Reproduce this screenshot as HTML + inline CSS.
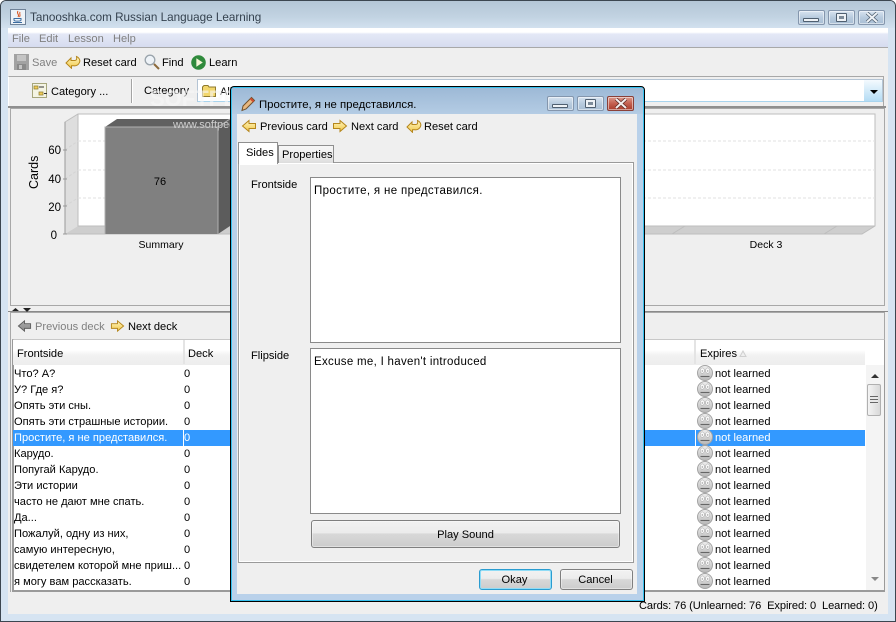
<!DOCTYPE html>
<html><head><meta charset="utf-8"><style>
html,body{margin:0;padding:0;width:896px;height:622px;overflow:hidden;background:#fff}
body{position:relative;font-family:"Liberation Sans","Noto Sans CJK SC",sans-serif;font-size:11.1px;color:#000}
div,span,svg{position:absolute;box-sizing:border-box}
.t{white-space:nowrap;line-height:14px;height:14px;margin-top:1px}
.g{color:#808080}
.wb{width:27px;height:15px;border:1px solid #8496ad;border-radius:2px;background:linear-gradient(#d8e4f0,#b8cbde 50%,#a8bed4);box-shadow:inset 0 0 0 1px rgba(255,255,255,.5)}
.btn{border:1px solid #7f7f7f;border-radius:3px;background:linear-gradient(#f2f2f2,#ececec 45%,#d8d8d8 50%,#cccccc);text-align:center;box-shadow:inset 0 0 0 1px rgba(255,255,255,.4)}
.ta{background:#fff;border:1px solid #8a8a8a}
.row{left:13px;width:852px;height:16px}
.fc{left:697px;width:16px;height:16px}
</style></head><body>
<svg width="0" height="0" style="left:0;top:0">
<defs>
<linearGradient id="y" x1="0" y1="0" x2="0" y2="1"><stop offset="0" stop-color="#fff6c0"/><stop offset="1" stop-color="#f2c848"/></linearGradient>
<linearGradient id="s" x1="0" y1="0" x2="0" y2="1"><stop offset="0" stop-color="#f0f0f0"/><stop offset=".5" stop-color="#d2d2d2"/><stop offset="1" stop-color="#b8b8b8"/></linearGradient>
<symbol id="r" viewBox="0 0 16 14"><path d="M1.500 4.500H8V1.500L14.500 7L8 12.500V9.500H1.500Z" fill="url(#y)" stroke="#b5861c"/></symbol>
<symbol id="l" viewBox="0 0 16 14"><path d="M14.500 4.500H8V1.500L1.500 7L8 12.500V9.500H14.500Z" fill="url(#y)" stroke="#b5861c"/></symbol>
<symbol id="u" viewBox="0 0 16 14"><path d="M1 8L6 3V5.500H10C11.500 5.500 12 4 11.500 1.500C14 2.500 15.500 5 14.500 7.500C13.500 10 11 11 9 10.800H6.500V13.300Z" fill="url(#y)" stroke="#b5861c"/></symbol>
<symbol id="f" viewBox="0 0 16 16"><circle cx="8" cy="8" r="7.500" fill="url(#s)" stroke="#a4a4a4"/><ellipse cx="5.300" cy="5.600" rx="2.100" ry="2.700" fill="#f8f8f8" stroke="#a0a0a0" stroke-width=".5"/><ellipse cx="10.700" cy="5.600" rx="2.100" ry="2.700" fill="#f8f8f8" stroke="#a0a0a0" stroke-width=".5"/><circle cx="5.300" cy="6" r=".7" fill="#999"/><circle cx="10.700" cy="6" r=".7" fill="#999"/><path d="M3.500 11.500H12.500" stroke="#666" stroke-width="1.100"/></symbol>
</defs></svg>

<!-- main window frame -->
<div style="left:0;top:0;width:896px;height:622px;background:#d6e4f2;border:1px solid #3c4650;border-radius:6px 6px 0 0"></div>
<div style="left:1px;top:1px;width:894px;height:27px;background:linear-gradient(#b4c6d6,#c2d3e2 60%,#d2e1ef);border-radius:5px 5px 0 0"></div>
<svg style="left:10px;top:9px" width="16" height="17" viewBox="0 0 16 17"><rect x=".5" y=".5" width="15" height="15" fill="#eef3f8" stroke="#6f8298"/><path d="M8 2C6 5 10 5 8 8M10 3C9 5 11 6 9.500 8" stroke="#d8541e" fill="none"/><path d="M4 9.500H11V11C11 12.500 4 12.500 4 11ZM3 13.500H12" stroke="#3b6ca0" fill="none"/></svg>
<div class="t" style="left:30px;top:10px;color:#35424f;font-size:11.700px">Tanooshka.com Russian Language Learning</div>
<div class="wb" style="left:798px;top:10px"><div style="left:4px;top:7px;width:16px;height:4px;background:#eef2f6;border:1px solid #4f5f70;border-radius:1px"></div></div>
<div class="wb" style="left:828px;top:10px"><div style="left:7px;top:2px;width:11px;height:9px;background:#eef2f6;border:1px solid #4f5f70;border-radius:1px"></div><div style="left:10px;top:5px;width:5px;height:3px;background:#7d8b99"></div></div>
<div class="wb" style="left:858px;top:10px"><svg style="left:5px;top:1px" width="16" height="11" viewBox="0 0 16 11"><path d="M3 1L13 10M13 1L3 10" stroke="#4f5f70" stroke-width="3.500"/><path d="M3 1L13 10M13 1L3 10" stroke="#eef2f6" stroke-width="2"/></svg></div>

<!-- client -->
<div style="left:8px;top:28px;width:880px;height:586px;background:#efefef"></div>
<div style="left:8px;top:28px;width:880px;height:20px;background:linear-gradient(#fff,#fff 22%,#e4e8f6 32%,#d6dcef);border-bottom:1px solid #a8a8a8"></div>
<div class="t g" style="left:12px;top:31px">File</div>
<div class="t g" style="left:39px;top:31px">Edit</div>
<div class="t g" style="left:68px;top:31px">Lesson</div>
<div class="t g" style="left:113px;top:31px">Help</div>

<!-- toolbar -->
<svg style="left:14px;top:54px" width="15" height="16" viewBox="0 0 15 16"><rect width="15" height="16" fill="#a2a2a2"/><rect x="3" y="1" width="9" height="6" fill="#c4c4c4"/><rect x="3" y="10" width="9" height="6" fill="#8a8a8a"/><rect x="5" y="11" width="3" height="4" fill="#c4c4c4"/></svg>
<div class="t g" style="left:32px;top:55px">Save</div>
<svg style="left:65px;top:55px" width="16" height="14"><use href="#u" width="16" height="14"/></svg>
<div class="t" style="left:83px;top:55px">Reset card</div>
<svg style="left:144px;top:54px" width="16" height="16" viewBox="0 0 16 16"><circle cx="6" cy="6" r="4.800" fill="#eef3f8" stroke="#9aa4ac" stroke-width="1.300"/><path d="M10 10L15 15" stroke="#8c6a3c" stroke-width="2"/></svg>
<div class="t" style="left:162px;top:55px">Find</div>
<svg style="left:191px;top:55px" width="15" height="15" viewBox="0 0 14 14"><circle cx="7" cy="7" r="6.800" fill="#2f8a3c"/><path d="M5 3L11 7L5 11Z" fill="#f4f4d8"/></svg>
<div class="t" style="left:209px;top:55px">Learn</div>

<!-- second toolbar -->
<div style="left:8px;top:76px;width:876px;height:31px;border:1px solid #a8a8a8;border-left-color:#fff;background:#efefef"></div>
<div style="left:8px;top:106px;width:878px;height:2px;background:#8f8f8f"></div>
<svg style="left:32px;top:83px" width="16" height="15" viewBox="0 0 16 15"><rect x=".5" y=".5" width="14" height="14" fill="#f4f4e4" stroke="#a6a67c"/><path d="M2 3H6V6H2ZM7 9H11V12H7Z" fill="#f0cc58" stroke="#8a7a30" stroke-width=".7"/><path d="M7 4H12M12 10.500H15" stroke="#333"/></svg>
<div class="t" style="left:51px;top:84px">Category ...</div>
<div style="left:131px;top:79px;width:1px;height:24px;background:#a4a4a4"></div>
<div style="left:132px;top:79px;width:1px;height:24px;background:#fff"></div>
<div class="t" style="left:144px;top:83px">Category</div>
<div style="left:197px;top:79px;width:686px;height:23px;background:#fff;border:1px solid #b4c4d4;border-bottom:1px solid #a8d4ee"></div>
<div style="left:864px;top:80px;width:18px;height:21px;background:linear-gradient(#f4fafe,#b4dcf4)"></div>
<div style="left:870px;top:90px;width:0;height:0;border:4px solid transparent;border-top:4px solid #000;border-bottom:0"></div>
<svg style="left:202px;top:85px" width="14" height="12" viewBox="0 0 14 12"><path d="M.5 11.500V2L2 .5H6L7 2H13.500V11.500Z" fill="#f2d66c" stroke="#8f7a2e"/></svg>
<div class="t" style="left:220px;top:84px">All</div>

<!-- chart panel -->
<div style="left:10px;top:108px;width:875px;height:198px;background:#efefef;border:1px solid #a8a8a8"></div>
<svg style="left:0;top:0" width="896" height="314" viewBox="0 0 896 314" font-family="Liberation Sans, sans-serif">
<polygon points="78,114 875,114 875,226 78,226" fill="#fff"/>
<polygon points="65,122 78,114 78,226 65,234" fill="#dedede"/>
<polygon points="65,234 78,226 875,226 862,234" fill="#cecece"/>
<path d="M65 122L78 114H875V226L862 234H65ZM78 114V226H875" fill="none" stroke="#bdbdbd"/>
<path d="M78 141H875M78 170H875M78 198H875" stroke="#e2e2e2" stroke-dasharray="3 2"/>
<path d="M65 150L78 141M65 179L78 170M65 206L78 198" stroke="#d4d4d4" stroke-dasharray="3 2"/>
<path d="M672 234L685 226M824 234L837 226" stroke="#bdbdbd"/>
<path d="M65 122V234M63 150H67M63 179H67M63 206H67M63 234H67" stroke="#999"/>
<polygon points="105,127 117,119 230,119 218,127" fill="#606060"/>
<polygon points="218,127 230,119 230,226 218,234" fill="#5c5c5c"/>
<rect x="105" y="127" width="113" height="107" fill="#808080"/>
<path d="M105 234V127H218V234M218 127L230 119" stroke="#b0b0b0" fill="none"/>
<text x="160" y="185" text-anchor="middle" font-size="11">76</text>
<text x="61" y="154" text-anchor="end" font-size="11.500">60</text>
<text x="61" y="183" text-anchor="end" font-size="11.500">40</text>
<text x="61" y="211" text-anchor="end" font-size="11.500">20</text>
<text x="57" y="239" text-anchor="end" font-size="11.500">0</text>
<text x="161" y="248" text-anchor="middle" font-size="10.500">Summary</text>
<text x="766" y="248" text-anchor="middle" font-size="10.500">Deck 3</text>
<text transform="translate(38,189) rotate(-90)" font-size="12.500">Cards</text>
<text x="173" y="128" font-size="11" fill="#cfcfcf">www.softpedia</text>
<text x="150" y="106" font-size="22" font-weight="bold" fill="#f8f8f8" opacity=".6">SOFTPEDIA</text>
</svg>
<div style="left:8px;top:311px;width:880px;height:1px;background:#8a8a8a"></div>

<!-- lower panel -->
<div style="left:10px;top:312px;width:875px;height:280px;background:#efefef;border:1px solid #a8a8a8;border-bottom:0"></div>
<svg style="left:0;top:306px" width="40" height="8"><path d="M12 5L15.500 2L19 5ZM23 2H31L27 6Z" fill="#222"/></svg>
<svg style="left:17px;top:319px" width="15" height="14"><use href="#l" width="15" height="14" style="filter:grayscale(1) brightness(.7)"/></svg>
<div class="t g" style="left:35px;top:319px">Previous deck</div>
<svg style="left:110px;top:319px" width="15" height="14"><use href="#r" width="15" height="14"/></svg>
<div class="t" style="left:128px;top:319px">Next deck</div>
<div style="left:12px;top:339px;width:873px;height:253px;background:#fff;border:2px solid #9a9a9a;border-top:1px solid #c8c8c8;border-right:1px solid #9a9a9a"></div>
<div style="left:13px;top:340px;width:852px;height:25px;background:linear-gradient(#fff,#fff 40%,#f2f2f2 60%,#ededed)"></div>
<div style="left:183px;top:340px;width:2px;height:24px;background:#e4e4e4"></div>
<div style="left:694px;top:340px;width:2px;height:24px;background:#e4e4e4"></div>
<div class="t" style="left:17px;top:346px">Frontside</div>
<div class="t" style="left:188px;top:346px">Deck</div>
<div class="t" style="left:700px;top:346px">Expires</div>
<svg style="left:739px;top:350px" width="8" height="7"><path d="M1 6.500H7L4 1Z" fill="#efefef" stroke="#cfcfcf"/></svg>

<div class="row" style="top:430px;background:#3399ff"></div>
<div style="left:183px;top:430px;width:1px;height:16px;background:#fff"></div>
<div style="left:695px;top:430px;width:1px;height:16px;background:#fff"></div>

<div class="t" style="left:14px;top:366px">Что? А?</div><div class="t" style="left:184px;top:366px">0</div>
<div class="t" style="left:14px;top:382px">У? Где я?</div><div class="t" style="left:184px;top:382px">0</div>
<div class="t" style="left:14px;top:398px">Опять эти сны.</div><div class="t" style="left:184px;top:398px">0</div>
<div class="t" style="left:14px;top:414px">Опять эти страшные истории.</div><div class="t" style="left:184px;top:414px">0</div>
<div class="t" style="left:14px;top:430px;color:#fff">Простите, я не представился.</div><div class="t" style="left:184px;top:430px;color:#fff">0</div>
<div class="t" style="left:14px;top:446px">Карудо.</div><div class="t" style="left:184px;top:446px">0</div>
<div class="t" style="left:14px;top:462px">Попугай Карудо.</div><div class="t" style="left:184px;top:462px">0</div>
<div class="t" style="left:14px;top:478px">Эти истории</div><div class="t" style="left:184px;top:478px">0</div>
<div class="t" style="left:14px;top:494px">часто не дают мне спать.</div><div class="t" style="left:184px;top:494px">0</div>
<div class="t" style="left:14px;top:510px">Да...</div><div class="t" style="left:184px;top:510px">0</div>
<div class="t" style="left:14px;top:526px">Пожалуй, одну из них,</div><div class="t" style="left:184px;top:526px">0</div>
<div class="t" style="left:14px;top:542px">самую интересную,</div><div class="t" style="left:184px;top:542px">0</div>
<div class="t" style="left:14px;top:558px">свидетелем которой мне приш...</div><div class="t" style="left:184px;top:558px">0</div>
<div class="t" style="left:14px;top:574px">я могу вам рассказать.</div><div class="t" style="left:184px;top:574px">0</div>

<svg class="fc" style="top:365px"><use href="#f" width="16" height="16"/></svg><div class="t" style="left:715px;top:366px">not learned</div>
<svg class="fc" style="top:381px"><use href="#f" width="16" height="16"/></svg><div class="t" style="left:715px;top:382px">not learned</div>
<svg class="fc" style="top:397px"><use href="#f" width="16" height="16"/></svg><div class="t" style="left:715px;top:398px">not learned</div>
<svg class="fc" style="top:413px"><use href="#f" width="16" height="16"/></svg><div class="t" style="left:715px;top:414px">not learned</div>
<svg class="fc" style="top:429px"><use href="#f" width="16" height="16"/></svg><div class="t" style="left:715px;top:430px;color:#fff">not learned</div>
<svg class="fc" style="top:445px"><use href="#f" width="16" height="16"/></svg><div class="t" style="left:715px;top:446px">not learned</div>
<svg class="fc" style="top:461px"><use href="#f" width="16" height="16"/></svg><div class="t" style="left:715px;top:462px">not learned</div>
<svg class="fc" style="top:477px"><use href="#f" width="16" height="16"/></svg><div class="t" style="left:715px;top:478px">not learned</div>
<svg class="fc" style="top:493px"><use href="#f" width="16" height="16"/></svg><div class="t" style="left:715px;top:494px">not learned</div>
<svg class="fc" style="top:509px"><use href="#f" width="16" height="16"/></svg><div class="t" style="left:715px;top:510px">not learned</div>
<svg class="fc" style="top:525px"><use href="#f" width="16" height="16"/></svg><div class="t" style="left:715px;top:526px">not learned</div>
<svg class="fc" style="top:541px"><use href="#f" width="16" height="16"/></svg><div class="t" style="left:715px;top:542px">not learned</div>
<svg class="fc" style="top:557px"><use href="#f" width="16" height="16"/></svg><div class="t" style="left:715px;top:558px">not learned</div>
<svg class="fc" style="top:573px"><use href="#f" width="16" height="16"/></svg><div class="t" style="left:715px;top:574px">not learned</div>

<!-- scrollbar -->
<div style="left:866px;top:365px;width:18px;height:225px;background:#f4f4f4"></div>
<div style="left:871px;top:374px;width:0;height:0;border:4px solid transparent;border-bottom:4px solid #333;border-top:0"></div>
<div style="left:867px;top:384px;width:14px;height:32px;background:linear-gradient(90deg,#f4f4f4,#d8d8d8);border:1px solid #b0b0b0;border-radius:2px"></div>
<div style="left:870px;top:396px;width:8px;height:8px;background:repeating-linear-gradient(#666 0 1px,#e8e8e8 1px 3px)"></div>
<div style="left:871px;top:577px;width:0;height:0;border:4px solid transparent;border-top:4px solid #888;border-bottom:0"></div>

<!-- status -->
<div class="t" style="left:639px;top:598px;white-space:pre;letter-spacing:-.1px">Cards: 76 (Unlearned: 76  Expired: 0  Learned: 0)</div>

<!-- dialog -->
<div style="left:230px;top:86px;width:415px;height:516px;border:1px solid #000;border-radius:4px 4px 0 0;background:#b9d1ea;box-shadow:inset 0 0 0 1px #35c0ee"></div>
<div style="left:232px;top:88px;width:411px;height:26px;background:linear-gradient(#9db9d6,#b4cce4)"></div>
<svg style="left:240px;top:96px" width="16" height="16" viewBox="0 0 16 16"><path d="M3 10L11.500 1.500L14.500 4.500L6 13L2 14.500Z" fill="#e8b880" stroke="#70502c"/><path d="M10.500 2.500L13.500 5.500" stroke="#d04c30" stroke-width="2"/></svg>
<div class="t" style="left:259px;top:97px;font-size:11.400px">Простите, я не представился.</div>
<div class="wb" style="left:547px;top:96px"><div style="left:4px;top:7px;width:16px;height:4px;background:#eef2f6;border:1px solid #4f5f70;border-radius:1px"></div></div>
<div class="wb" style="left:577px;top:96px"><div style="left:7px;top:2px;width:11px;height:9px;background:#eef2f6;border:1px solid #4f5f70;border-radius:1px"></div><div style="left:10px;top:5px;width:5px;height:3px;background:#7d8b99"></div></div>
<div class="wb" style="left:607px;top:96px;border-color:#8a4038;background:linear-gradient(#dc9a8c,#c46050 50%,#a83c2c)"><svg style="left:5px;top:1px" width="16" height="11" viewBox="0 0 16 11"><path d="M3 1L13 10M13 1L3 10" stroke="#5c2a24" stroke-width="3.500"/><path d="M3 1L13 10M13 1L3 10" stroke="#f4eeee" stroke-width="2"/></svg></div>

<div style="left:237px;top:114px;width:400px;height:480px;background:#efefef"></div>
<svg style="left:241px;top:119px" width="16" height="14"><use href="#l" width="16" height="14"/></svg>
<div class="t" style="left:260px;top:119px">Previous card</div>
<svg style="left:332px;top:119px" width="16" height="14"><use href="#r" width="16" height="14"/></svg>
<div class="t" style="left:351px;top:119px">Next card</div>
<svg style="left:406px;top:119px" width="16" height="14"><use href="#u" width="16" height="14"/></svg>
<div class="t" style="left:424px;top:119px">Reset card</div>

<div style="left:238px;top:162px;width:396px;height:401px;border:1px solid #9a9a9a;box-shadow:inset 0 0 0 1px #fff;background:#efefef"></div>
<div style="left:278px;top:145px;width:56px;height:18px;border:1px solid #8f8f8f;border-bottom:0;background:linear-gradient(#f6f6f6,#f0f0f0 50%,#dcdcdc)"></div>
<div class="t" style="left:282px;top:147px">Properties</div>
<div style="left:238px;top:142px;width:40px;height:22px;border:1px solid #8f8f8f;border-bottom:0;background:#fff"></div>
<div style="left:240px;top:163px;width:37px;height:2px;background:#fff"></div>
<div class="t" style="left:246px;top:145px">Sides</div>

<div class="t" style="left:251px;top:177px">Frontside</div>
<div class="ta" style="left:310px;top:177px;width:311px;height:166px"></div>
<div class="t" style="left:314px;top:183px;font-size:11.500px;letter-spacing:.35px">Простите, я не представился.</div>
<div class="t" style="left:251px;top:348px">Flipside</div>
<div class="ta" style="left:310px;top:348px;width:311px;height:166px"></div>
<div class="t" style="left:314px;top:354px;font-size:11.500px;letter-spacing:.3px">Excuse me, I haven't introduced</div>

<div class="btn" style="left:311px;top:520px;width:309px;height:28px;line-height:28px">Play Sound</div>
<div class="btn" style="left:479px;top:569px;width:73px;height:21px;line-height:20px;padding-right:2px;border-color:#2a9cd0;box-shadow:inset 0 0 0 1px #8fdcf6">Okay</div>
<div class="btn" style="left:560px;top:569px;width:73px;height:21px;line-height:20px;padding-right:2px">Cancel</div>
</body></html>
